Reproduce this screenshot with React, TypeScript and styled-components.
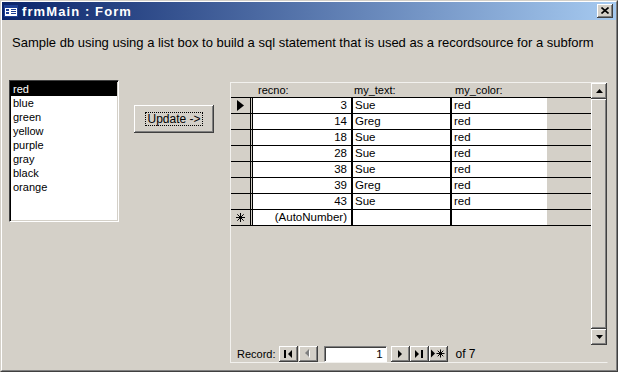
import React from 'react';
import styled, { createGlobalStyle } from 'styled-components';

const GlobalStyle = createGlobalStyle`
  html, body { margin: 0; padding: 0; background: #ffffff; }
  body { font-family: "Liberation Sans", Arial, sans-serif; }
  * { box-sizing: border-box; }
`;

const FACE = '#d4d0c8';

const Window = styled.div`
  width: 618px;
  height: 372px;
  background: ${FACE};
  border: 1px solid;
  border-color: ${FACE} #404040 #404040 ${FACE};
  display: flex;
  flex-direction: column;
`;

const Frame = styled.div`
  flex: 1;
  display: flex;
  flex-direction: column;
  border: 1px solid;
  border-color: #ffffff #808080 #808080 #ffffff;
`;

const TitleBar = styled.div`
  height: 18px;
  display: flex;
  align-items: center;
  padding-left: 2px;
  gap: 4px;
  background: linear-gradient(to right, #0a246a, #a6caf0);
`;

const TitleText = styled.span`
  color: #ffffff;
  font-weight: bold;
  font-size: 13px;
  letter-spacing: 1.1px;
  flex: 1;
`;

const raised = `
  background: ${FACE};
  box-shadow: inset -1px -1px #404040, inset 1px 1px #ffffff,
    inset -2px -2px #808080, inset 2px 2px ${FACE};
`;

const CloseButton = styled.div`
  ${raised}
  width: 16px;
  height: 14px;
  margin-right: 3px;
  display: flex;
  align-items: center;
  justify-content: center;
  padding-bottom: 1px;
`;

const Description = styled.div`
  margin-top: 15px;
  padding-left: 10px;
  height: 15px;
  line-height: 15px;
  font-size: 13px;
  color: #000;
  white-space: nowrap;
`;

const MainRow = styled.div`
  margin-top: 30px;
  display: flex;
  align-items: flex-start;
`;

const ListBox = styled.div`
  margin-left: 7px;
  width: 110px;
  height: 142px;
  background: #ffffff;
  border: 1px solid;
  border-color: #404040 #ffffff #ffffff #404040;
  box-shadow: inset 1px 1px #000000, inset -1px -1px ${FACE};
  padding: 1px 1px;
  display: flex;
  flex-direction: column;
`;

const ListItem = styled.div<{ $selected?: boolean }>`
  height: 14px;
  line-height: 14px;
  font-size: 11px;
  padding-left: 2px;
  color: ${(p) => (p.$selected ? '#ffffff' : '#000000')};
  background: ${(p) => (p.$selected ? '#000000' : 'transparent')};
`;

const UpdateButton = styled.div`
  ${raised}
  margin-left: 15px;
  margin-top: 25px;
  width: 80px;
  height: 28px;
  display: flex;
  align-items: center;
  justify-content: center;
  font-size: 12px;
`;

const FocusRect = styled.span`
  border: 1px dotted #000;
  padding: 0 1px;
  line-height: 12px;
`;

const Subform = styled.div`
  margin-left: 16px;
  margin-top: 2px;
  width: 378px;
  height: 281px;
  border: 1px solid #f2f1ee;
  border-right-color: ${FACE};
  display: flex;
  flex-direction: column;
`;

const Datasheet = styled.div`
  height: 262px;
  display: flex;
`;

const Grid = styled.div`
  flex: 1;
  display: flex;
  flex-direction: column;
`;

const Row = styled.div<{ $header?: boolean }>`
  height: ${(p) => (p.$header ? 15 : 16)}px;
  display: flex;
  border-bottom: 1px solid #000;
  font-size: 11.5px;
  line-height: 15px;
`;

const Selector = styled.div`
  width: 22px;
  background: ${FACE};
  border-right: 3px double #000;
  display: flex;
  align-items: center;
  justify-content: center;
  padding-right: 1px;
`;

const HeaderCell = styled.div<{ $w: number; $pad: number }>`
  width: ${(p) => p.$w}px;
  padding-left: ${(p) => p.$pad}px;
  color: #000;
  font-size: 11px;
  line-height: 14px;
`;

const HeaderSpacer = styled.div`
  width: 22px;
`;

const Cell = styled.div<{ $w: number; $right?: boolean; $sep?: boolean }>`
  width: ${(p) => p.$w}px;
  background: #ffffff;
  text-align: ${(p) => (p.$right ? 'right' : 'left')};
  padding: ${(p) => (p.$right ? '0 4px 0 0' : '0 0 0 2px')};
  border-right: ${(p) => (p.$sep ? '2px solid #000' : 'none')};
  white-space: nowrap;
  overflow: hidden;
`;

const Scrollbar = styled.div`
  width: 16px;
  display: flex;
  flex-direction: column;
`;

const ScrollButton = styled.div`
  ${raised}
  width: 16px;
  height: 16px;
  display: flex;
  align-items: center;
  justify-content: center;
`;

const ScrollThumb = styled.div`
  flex: 1;
  ${raised}
`;

const NavBar = styled.div`
  height: 17px;
  display: flex;
  align-items: center;
  padding-left: 6px;
  font-size: 11px;
  color: #000;
`;

const NavLabel = styled.span`
  margin-right: 3px;
`;

const NavButton = styled.div`
  ${raised}
  width: 19px;
  height: 16px;
  display: flex;
  align-items: center;
  justify-content: center;
`;

const NavGap = styled.div<{ $w: number }>`
  width: ${(p) => p.$w}px;
`;

const RecordBox = styled.div`
  width: 63px;
  height: 16px;
  background: #ffffff;
  border: 1px solid;
  border-color: #808080 #ffffff #ffffff #808080;
  box-shadow: inset 1px 1px #404040;
  text-align: right;
  padding-right: 3px;
  line-height: 14px;
  font-size: 11.5px;
`;

const OfText = styled.span`
  margin-left: 8px;
  font-size: 12px;
`;

const FormIcon = () => (
  <svg width="14" height="12" viewBox="0 0 14 12">
    <rect x="0.5" y="0.5" width="13" height="11" fill="#ffffff" stroke="#1c3f94" />
    <rect x="1" y="1" width="12" height="2" fill="#1c3f94" />
    <rect x="2" y="4" width="3" height="2" fill="#1c3f94" />
    <rect x="2" y="7" width="3" height="2" fill="#1c3f94" />
    <rect x="7" y="4" width="5" height="1" fill="#1c3f94" />
    <rect x="7" y="6" width="5" height="1" fill="#1c3f94" />
    <rect x="7" y="8" width="5" height="1" fill="#1c3f94" />
  </svg>
);

const CloseIcon = () => (
  <svg width="8" height="7" viewBox="0 0 8 7">
    <path d="M0.5 0.5 L7.5 6.5 M7.5 0.5 L0.5 6.5" stroke="#000" strokeWidth="1.6" />
  </svg>
);

const Pointer = () => (
  <svg width="7" height="11" viewBox="0 0 7 11">
    <path d="M0 0 L7 5.5 L0 11 Z" fill="#000" />
  </svg>
);

const Star = ({ size = 9 }: { size?: number }) => (
  <svg width={size} height={size} viewBox="0 0 9 9">
    <path d="M4.5 0 V9 M0 4.5 H9 M1.3 1.3 L7.7 7.7 M7.7 1.3 L1.3 7.7" stroke="#000" strokeWidth="1" />
  </svg>
);

const Tri = ({ dir, color = '#000' }: { dir: 'l' | 'r' | 'u' | 'd'; color?: string }) => {
  const paths: Record<string, string> = {
    l: 'M4 0 L0 4 L4 8 Z',
    r: 'M0 0 L4 4 L0 8 Z',
    u: 'M0 4 L3.5 0 L7 4 Z',
    d: 'M0 0 L3.5 4 L7 0 Z',
  };
  const vertical = dir === 'u' || dir === 'd';
  return (
    <svg width={vertical ? 7 : 4} height={vertical ? 4 : 8} viewBox={vertical ? '0 0 7 4' : '0 0 4 8'}>
      <path d={paths[dir]} fill={color} />
    </svg>
  );
};

const FirstIcon = () => (
  <svg width="8" height="8" viewBox="0 0 8 8">
    <rect x="0" y="0" width="2" height="8" fill="#000" />
    <path d="M8 0 L4 4 L8 8 Z" fill="#000" />
  </svg>
);

const PrevIcon = () => (
  <svg width="6" height="9" viewBox="0 0 6 9">
    <path d="M5 1 L5 9 L1 5 Z" fill="#ffffff" />
    <path d="M4 0 L4 8 L0 4 Z" fill="#808080" />
  </svg>
);

const LastIcon = () => (
  <svg width="8" height="8" viewBox="0 0 8 8">
    <path d="M0 0 L4 4 L0 8 Z" fill="#000" />
    <rect x="6" y="0" width="2" height="8" fill="#000" />
  </svg>
);

const NewIcon = () => (
  <svg width="14" height="9" viewBox="0 0 14 9">
    <path d="M0 0.5 L4 4.5 L0 8.5 Z" fill="#000" />
    <path d="M9.5 0.5 V8.5 M5.5 4.5 H13.5 M6.7 1.7 L12.3 7.3 M12.3 1.7 L6.7 7.3" stroke="#000" strokeWidth="1" />
  </svg>
);

const colors = ['red', 'blue', 'green', 'yellow', 'purple', 'gray', 'black', 'orange'];

const records = [
  { recno: 3, text: 'Sue', color: 'red' },
  { recno: 14, text: 'Greg', color: 'red' },
  { recno: 18, text: 'Sue', color: 'red' },
  { recno: 28, text: 'Sue', color: 'red' },
  { recno: 38, text: 'Sue', color: 'red' },
  { recno: 39, text: 'Greg', color: 'red' },
  { recno: 43, text: 'Sue', color: 'red' },
];

export default function App() {
  return (
    <>
      <GlobalStyle />
      <Window>
        <Frame>
          <TitleBar>
            <FormIcon />
            <TitleText>frmMain : Form</TitleText>
            <CloseButton>
              <CloseIcon />
            </CloseButton>
          </TitleBar>
          <Description>
            Sample db using using a list box to build a sql statement that is used as a recordsource for a subform
          </Description>
          <MainRow>
            <ListBox>
              {colors.map((c, i) => (
                <ListItem key={c} $selected={i === 0}>
                  {c}
                </ListItem>
              ))}
            </ListBox>
            <UpdateButton>
              <FocusRect>Update -&gt;</FocusRect>
            </UpdateButton>
            <Subform>
              <Datasheet>
                <Grid>
                  <Row $header>
                    <HeaderSpacer />
                    <HeaderCell $w={100} $pad={5}>recno:</HeaderCell>
                    <HeaderCell $w={100} $pad={1}>my_text:</HeaderCell>
                    <HeaderCell $w={95} $pad={2}>my_color:</HeaderCell>
                  </Row>
                  {records.map((r, i) => (
                    <Row key={r.recno}>
                      <Selector>{i === 0 ? <Pointer /> : null}</Selector>
                      <Cell $w={100} $right $sep>
                        {r.recno}
                      </Cell>
                      <Cell $w={99} $sep>
                        {r.text}
                      </Cell>
                      <Cell $w={95}>{r.color}</Cell>
                    </Row>
                  ))}
                  <Row>
                    <Selector>
                      <Star />
                    </Selector>
                    <Cell $w={100} $right $sep>
                      (AutoNumber)
                    </Cell>
                    <Cell $w={99} $sep />
                    <Cell $w={95} />
                  </Row>
                </Grid>
                <Scrollbar>
                  <ScrollButton>
                    <Tri dir="u" />
                  </ScrollButton>
                  <ScrollThumb />
                  <ScrollButton>
                    <Tri dir="d" />
                  </ScrollButton>
                </Scrollbar>
              </Datasheet>
              <NavBar>
                <NavLabel>Record:</NavLabel>
                <NavButton>
                  <FirstIcon />
                </NavButton>
                <NavGap $w={1} />
                <NavButton>
                  <PrevIcon />
                </NavButton>
                <NavGap $w={6} />
                <RecordBox>1</RecordBox>
                <NavGap $w={4} />
                <NavButton>
                  <Tri dir="r" />
                </NavButton>
                <NavButton>
                  <LastIcon />
                </NavButton>
                <NavButton>
                  <NewIcon />
                </NavButton>
                <OfText>of 7</OfText>
              </NavBar>
            </Subform>
          </MainRow>
        </Frame>
      </Window>
    </>
  );
}
